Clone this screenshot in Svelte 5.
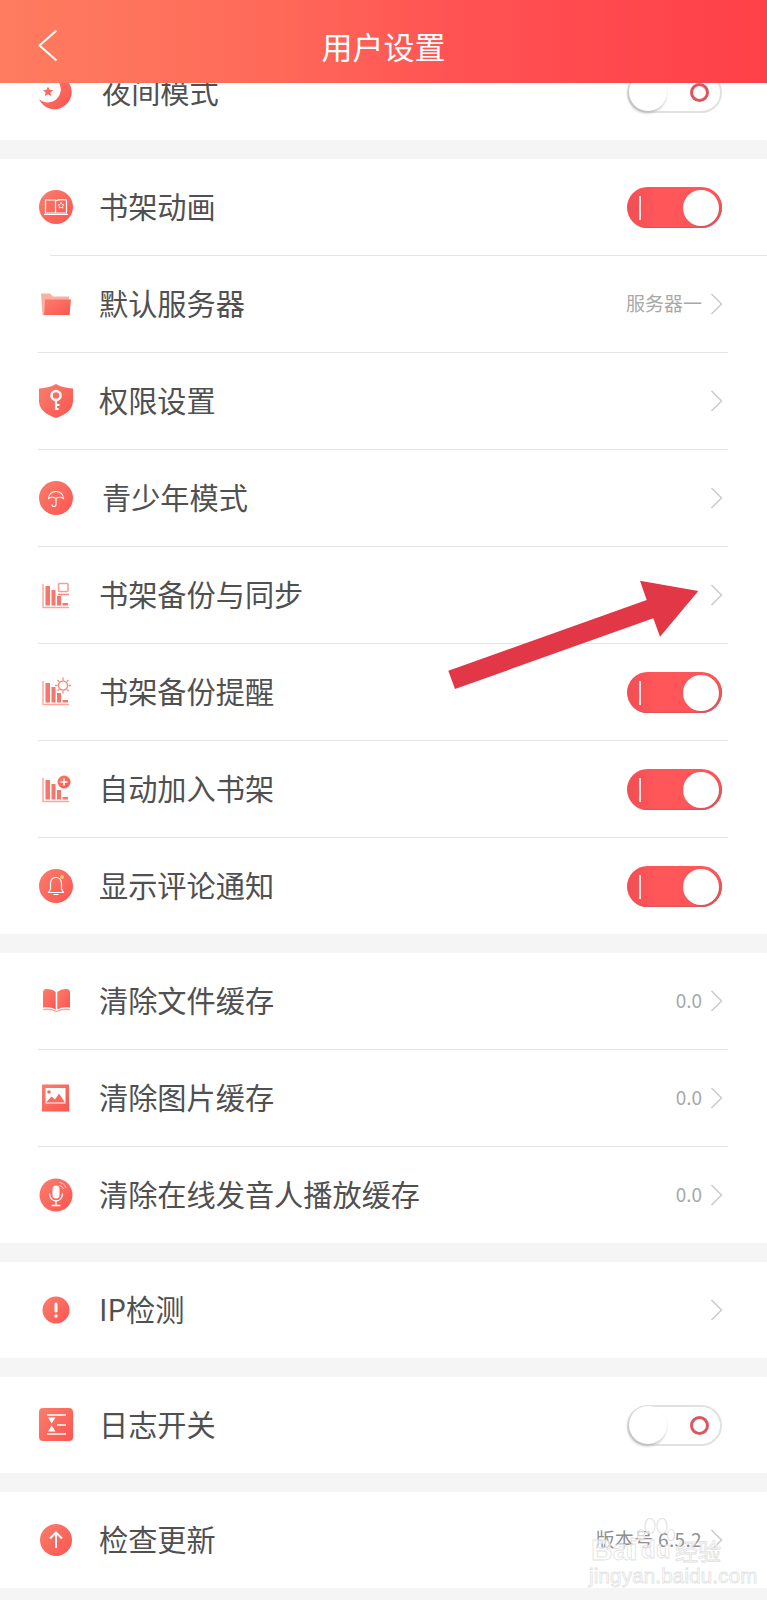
<script>
  const groups = [
    [{ icon: 'moon', label: '夜间模式', toggle: 'off', nudge: true }],
    [
      { icon: 'bookCircle', label: '书架动画', toggle: 'on', long: true },
      { icon: 'folder', label: '默认服务器', value: '服务器一', chevron: true },
      { icon: 'shield', label: '权限设置', chevron: true },
      { icon: 'umbrella', label: '青少年模式', chevron: true, nudge: true },
      { icon: 'barBackup', label: '书架备份与同步', chevron: true },
      { icon: 'barSun', label: '书架备份提醒', toggle: 'on' },
      { icon: 'barPlus', label: '自动加入书架', toggle: 'on' },
      { icon: 'bell', label: '显示评论通知', toggle: 'on' }
    ],
    [
      { icon: 'book', label: '清除文件缓存', value: '0.0', chevron: true },
      { icon: 'picture', label: '清除图片缓存', value: '0.0', chevron: true },
      { icon: 'mic', label: '清除在线发音人播放缓存', value: '0.0', chevron: true }
    ],
    [{ icon: 'alert', label: 'IP检测', chevron: true }],
    [{ icon: 'log', label: '日志开关', toggle: 'off' }],
    [{ icon: 'update', label: '检查更新', value: '版本号 6.5.2', wide: true, chevron: true }]
  ];
</script>

{#snippet bars()}
  <path d="M4 6v23.5h26" fill="none" stroke="#f9a79b" stroke-width="1.4" />
  <rect x="6.5" y="8" width="4.5" height="19.5" fill="#f5776b" />
  <rect x="12.5" y="12" width="4" height="15.5" fill="#f5776b" />
  <rect x="18" y="18" width="4" height="9.5" fill="#f5776b" />
  <rect x="23.5" y="25" width="5.5" height="2.5" fill="#f5776b" />
{/snippet}

{#snippet glyph(name)}
  <svg class="icon" viewBox="0 0 34 34" aria-hidden="true">
    {#if name === 'moon'}
      <path d="M14 .3A17 17 0 1 1 0 24A13 13 0 1 0 14 2.5Z" fill="url(#ic)" />
      <path d="M9 11.5l1.500 3.300 3.600.4-2.700 2.400.8 3.500-3.200-1.800-3.200 1.800.8-3.500-2.700-2.400 3.600-.4Z" fill="url(#ic)" />
    {:else if name === 'bookCircle'}
      <circle cx="17" cy="17" r="17" fill="url(#ic)" />
      <path d="M6.5 10h10v13h-10zM16.500 11c3-1.500 7-1.500 11-1v13h-11" fill="none" stroke="#fff" stroke-width="1.200" />
      <path d="M22 12.5l1 2 2 .3-1.500 1.400.4 2-1.900-1-1.900 1 .4-2-1.500-1.400 2-.3Z" fill="none" stroke="#fff" stroke-width=".8" />
      <path d="M5 24.5h24" stroke="#fff" stroke-width="1" />
    {:else if name === 'folder'}
      <path d="M2 6.5h9l3 3h16v4H6l-1 14.500H3.500Z" fill="#fcae9f" />
      <path d="M6 12.5h26l-1.500 15.500H5Z" fill="url(#ic)" />
    {:else if name === 'shield'}
      <path d="M17 0C22 3 28 4 34 4.500V17C34 26 26 31 17 34C8 31 0 26 0 17V4.500C6 4 12 3 17 0Z" fill="url(#ic)" />
      <circle cx="17" cy="11.5" r="4.500" fill="none" stroke="#fff" stroke-width="2.600" />
      <path d="M17 16v10M17 21h3.500M17 25h2.500" fill="none" stroke="#fff" stroke-width="2.200" />
    {:else if name === 'umbrella'}
      <circle cx="17" cy="17" r="17" fill="url(#ic)" />
      <path d="M9.5 17.5C9.500 13 13 10.500 17 10.500S24.500 13 24.500 17.500C22 15.800 19.500 15.800 17 17.500C14.500 15.800 12 15.800 9.500 17.500ZM17 17.500V23.500A2 2 0 0 1 13 23.500" fill="none" stroke="#fff" stroke-width="1.100" />
    {:else if name === 'barBackup'}
      {@render bars()}
      <rect x="19.5" y="5.5" width="9.5" height="8" rx="1" fill="#fff" stroke="#f79c8f" stroke-width="1.500" />
      <path d="M19 16.5h11" stroke="#f58d80" stroke-width="1.600" />
    {:else if name === 'barSun'}
      {@render bars()}
      <circle cx="24" cy="10.5" r="4.500" fill="#fff" stroke="#f58d80" stroke-width="1.500" />
      <path d="M24 2.5v2.500M24 16v2.500M16 10.500h2.500M29.500 10.500h2.500M18.500 5l1.700 1.700M29.500 5l-1.700 1.700M18.500 16l1.700-1.700M29.500 16l-1.700-1.700" stroke="#f58d80" stroke-width="1.300" />
    {:else if name === 'barPlus'}
      {@render bars()}
      <circle cx="25" cy="10" r="6.500" fill="url(#ic)" />
      <path d="M21.5 10h7M25 6.500v7" stroke="#fff" stroke-width="1.500" />
    {:else if name === 'bell'}
      <circle cx="17" cy="17" r="17" fill="url(#ic)" />
      <path d="M17 8.5C13 8.500 11.500 11.500 11.500 15V20L9.500 23.500H24.500L22.500 20V15C22.500 11.500 21 8.500 17 8.500ZM14.500 25.500H19.500" fill="none" stroke="#fff" stroke-width="1.200" stroke-linejoin="round" />
      <circle cx="23" cy="8" r="2" fill="#fbc768" />
    {:else if name === 'book'}
      <path d="M4 8.5Q4 5 7.500 5Q13.500 5 16.700 8V25.500Q12 22.500 4 23.500Z" fill="url(#ic)" />
      <path d="M31 8.5Q31 5 27.500 5Q21.500 5 18.300 8V25.500Q23 22.500 31 23.500Z" fill="url(#ic)" />
      <path d="M4 25.5Q12 24.500 17.500 27.500Q23 24.500 31 25.500" fill="none" stroke="#fbaa9d" stroke-width="1.300" />
    {:else if name === 'picture'}
      <rect x="3" y="3.5" width="27" height="27" fill="url(#ic)" />
      <rect x="6.5" y="7" width="20" height="15.5" fill="#fff" />
      <circle cx="10" cy="11" r="1.800" fill="#fa6a5e" />
      <path d="M7 21.5L12.500 15.500L16 18.500L20 12.500L26 21.500Z" fill="#fa6a5e" />
    {:else if name === 'mic'}
      <circle cx="17" cy="17" r="16.5" fill="url(#ic)" />
      <rect x="13.5" y="7.5" width="7" height="13" rx="3.500" fill="#fff" />
      <path d="M10.5 15.5C10.500 20 13.500 23 17 23S23.500 20 23.500 15.500M17 23V27M12.500 27.500H21.500" fill="none" stroke="#fff" stroke-width="1.300" />
      <path d="M20.5 4.5A8 8 0 0 1 27 10M20.500 7.500A5 5 0 0 1 24.500 11" fill="none" stroke="#fff" stroke-width=".9" opacity=".8" />
    {:else if name === 'alert'}
      <circle cx="17" cy="17" r="13.5" fill="url(#ic)" />
      <rect x="15.5" y="9.5" width="3" height="10" rx="1.500" fill="#fff" />
      <circle cx="17" cy="23" r="1.700" fill="#fff" />
    {:else if name === 'log'}
      <rect width="34" height="33" rx="4" fill="url(#ic)" />
      <path d="M8 7h19M18 17h9M8 26h19" stroke="#fff" stroke-width="1.500" />
      <path d="M9 9.5h7.500L12.700 15.500ZM12.700 17.500L16.500 23.500H9Z" fill="#fff" />
    {:else if name === 'update'}
      <circle cx="17" cy="17" r="16" fill="url(#ic)" />
      <path d="M17 25V10M11 15.5L17 9.500L23 15.500" fill="none" stroke="#fff" stroke-width="2" />
    {/if}
  </svg>
{/snippet}

<div class="page">
  <svg class="defs" width="0" height="0" aria-hidden="true">
    <defs>
      <linearGradient id="ic" x1="0" y1="0" x2="1" y2="1">
        <stop offset="0" stop-color="#f97e6c" />
        <stop offset="1" stop-color="#fd5451" />
      </linearGradient>
    </defs>
  </svg>

  <header>
    <svg class="back" width="22" height="33" viewBox="0 0 22 33" aria-hidden="true">
      <path d="M19.5 1.5L2.500 16.500L19.500 31.500" fill="none" stroke="#fff" stroke-width="2" />
    </svg>
    <h1>用户设置</h1>
  </header>

  <main>
    {#each groups as rows, g}
      <section class:first={g === 0}>
        {#each rows as row, i}
          <div class="row">
            {@render glyph(row.icon)}
            <span class="label" class:nudge={row.nudge}>{row.label}</span>
            {#if row.value}<span class="value" class:wide={row.wide}>{row.value}</span>{/if}
            {#if row.chevron}
              <svg class="chev" width="13" height="22" viewBox="0 0 13 22" aria-hidden="true">
                <path d="M1.5 1L11.500 11L1.500 21" fill="none" stroke="#cdcdcd" stroke-width="1.600" />
              </svg>
            {/if}
            {#if row.toggle === 'on'}
              <div class="toggle on"><i class="tick"></i><i class="knob"></i></div>
            {:else if row.toggle === 'off'}
              <div class="toggle off"><i class="knob"></i><i class="ring"></i></div>
            {/if}
          </div>
          {#if i < rows.length - 1}<div class="sep" class:long={row.long}></div>{/if}
        {/each}
      </section>
    {/each}
    <div class="end"></div>
  </main>

  <!-- annotation drawn on top of the screenshot -->
  <svg class="arrow" width="767" height="1600" viewBox="0 0 767 1600" aria-hidden="true">
    <path d="M448.3 670.7L455 689L653.300 618.300L660 636.700L698.300 591L640 580.700L646.700 600Z" fill="#e23746" />
  </svg>

  <div class="mark" aria-hidden="true">
    <svg class="paw" width="38" height="24" viewBox="0 0 38 24">
      <g fill="rgba(255,255,255,.6)" stroke="#e2e2e2" stroke-width="1.200">
        <ellipse cx="13" cy="8" rx="5" ry="7.500" />
        <ellipse cx="25" cy="8" rx="5" ry="7.500" />
        <ellipse cx="4" cy="17" rx="3.500" ry="5.500" />
        <ellipse cx="34" cy="17" rx="3.500" ry="5.500" />
      </g>
    </svg>
    <span class="bai">Bai</span>
    <span class="du">du</span>
    <span class="jy">经验</span>
    <span class="url">jingyan.baidu.com</span>
  </div>
</div>

<style>
  :global(body) {
    background: #f5f5f5;
  }
  .page {
    position: relative;
    width: 767px;
    height: 1600px;
    overflow: hidden;
    font-family: "Noto Sans CJK SC", "Noto Sans", sans-serif;
    background: #f5f5f5;
  }
  .defs {
    position: absolute;
  }
  header {
    position: relative;
    z-index: 2;
    box-sizing: border-box;
    height: 83px;
    padding-top: 9px;
    display: flex;
    align-items: center;
    justify-content: center;
    background: linear-gradient(90deg, #fe7c60 0%, #ff6a58 35%, #ff5253 60%, #ff4048 100%);
  }
  .back {
    position: absolute;
    left: 37px;
    top: 29px;
  }
  h1 {
    margin: 0;
    font-size: 31px;
    font-weight: 400;
    line-height: 40px;
    color: #fff;
  }
  main {
    display: flex;
    flex-direction: column;
    gap: 19px;
  }
  section {
    background: #fff;
  }
  section.first {
    margin-top: -39px;
  }
  .row {
    box-sizing: border-box;
    height: 96px;
    padding: 0 44px 0 39px;
    display: flex;
    align-items: center;
  }
  .icon {
    flex: none;
    width: 34px;
    height: 34px;
    overflow: visible;
  }
  .label {
    flex: 1;
    margin-left: 26px;
    padding-bottom: 4px;
    font-size: 29.2px;
    line-height: 40px;
    color: #505050;
  }
  .label.nudge {
    margin-left: 29px;
  }
  .value {
    margin-right: 8px;
    padding-bottom: 3px;
    font-size: 19px;
    color: #a8a8a8;
  }
  .value.wide {
    letter-spacing: 0.35px;
    color: #8f8f8f;
  }
  .chev {
    flex: none;
    margin-bottom: 1px;
  }
  .sep {
    height: 1px;
    margin: 0 39px 0 38px;
    background: #e4e4e4;
  }
  .sep.long {
    margin: 0 0 0 50px;
  }
  .toggle {
    flex: none;
    position: relative;
    box-sizing: border-box;
    width: 95px;
    height: 41px;
    margin-right: 1px;
    border-radius: 21px;
  }
  .toggle.on {
    background: linear-gradient(90deg, #f14e54, #ff5659 30%, #fe5558);
    box-shadow: inset -1px -1px 1px #d9555c;
  }
  .toggle.off {
    background: #fff;
    border: 2px solid #e2e0e0;
  }
  .tick {
    position: absolute;
    left: 12px;
    top: 9px;
    width: 2px;
    height: 24px;
    background: #fbe3e3;
  }
  .knob {
    position: absolute;
    border-radius: 50%;
    background: #fff;
  }
  .on .knob {
    right: 3px;
    top: 3px;
    width: 36px;
    height: 36px;
    box-shadow: 1px 1px 1px #d9555c;
  }
  .off .knob {
    left: 0;
    top: -1px;
    width: 38px;
    height: 38px;
    box-shadow: -1px 2px 3px #bbb;
  }
  .ring {
    position: absolute;
    right: 11px;
    top: 9px;
    box-sizing: border-box;
    width: 19px;
    height: 19px;
    border: 3px solid #dc5660;
    border-radius: 50%;
  }
  .end {
    height: 11px;
    border-bottom: 1px solid #bdbdbd;
    margin-top: -19px;
    padding-top: 19px;
    box-sizing: content-box;
  }
  .arrow {
    position: absolute;
    left: 0;
    top: 0;
    pointer-events: none;
  }
  .mark {
    position: absolute;
    left: 586px;
    top: 1516px;
    width: 140px;
    height: 70px;
  }
  .mark span {
    position: absolute;
    color: rgba(255, 255, 255, 0.65);
    -webkit-text-stroke: 0.8px #e2e2e2;
    white-space: nowrap;
    line-height: 1;
    font-family: "Liberation Sans", sans-serif;
  }
  .paw {
    position: absolute;
    left: 51px;
    top: 2px;
  }
  .bai {
    left: 5px;
    top: 19px;
    font-size: 30px;
    font-weight: 700;
  }
  .du {
    left: 55px;
    top: 22px;
    font-size: 24px;
    font-weight: 700;
  }
  .mark .jy {
    left: 89px;
    top: 23px;
    font-size: 23px;
    font-family: "Noto Sans CJK SC", sans-serif;
  }
  .url {
    left: 3px;
    top: 50px;
    font-size: 20.5px;
    letter-spacing: 0.2px;
  }
</style>
